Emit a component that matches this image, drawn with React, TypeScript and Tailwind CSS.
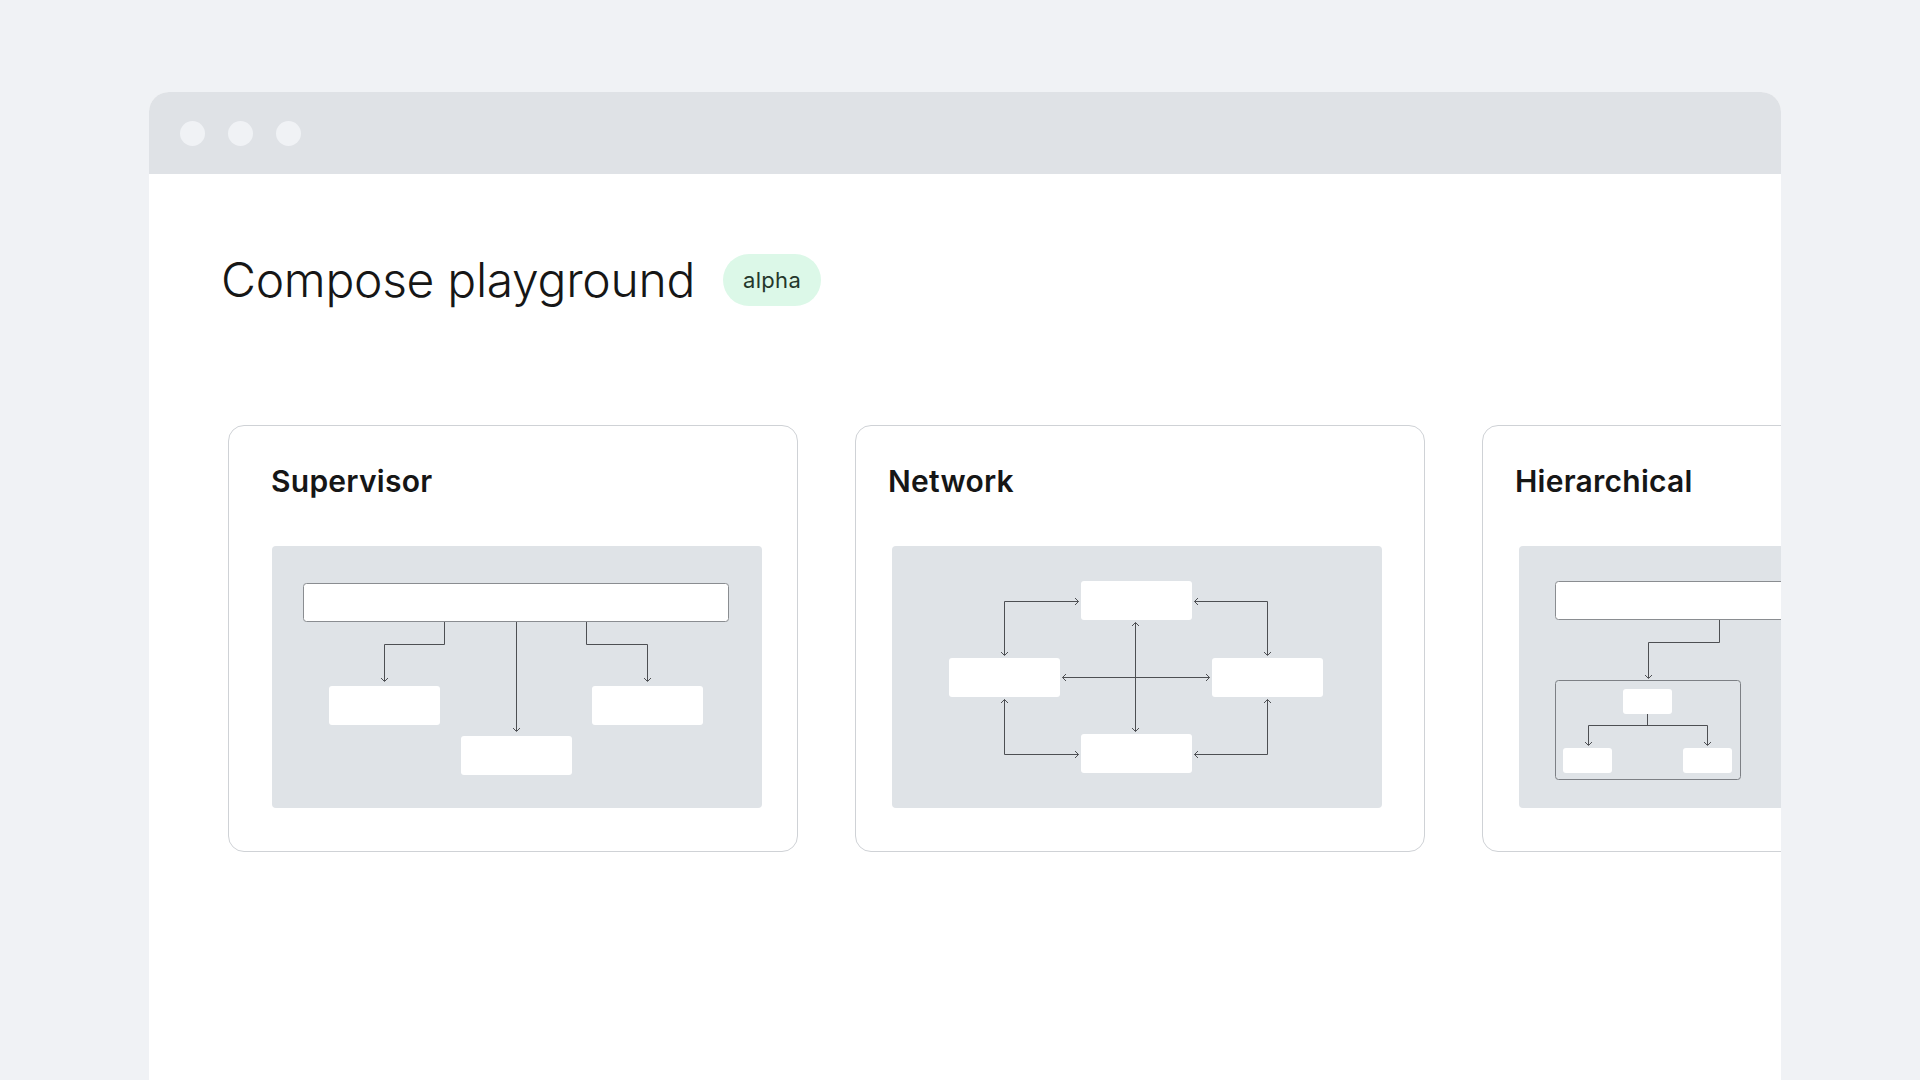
import React from 'react';

type Dir = 'up' | 'down' | 'left' | 'right';

const LINE = '#4d4f53';

// small open chevron at the tip of a connector
function Tip({ x, y, dir }: { x: number; y: number; dir: Dir }) {
  const s = 3.5;
  const d =
    dir === 'down'
      ? `M${x - s} ${y - s} L${x} ${y} L${x + s} ${y - s}`
      : dir === 'up'
        ? `M${x - s} ${y + s} L${x} ${y} L${x + s} ${y + s}`
        : dir === 'right'
          ? `M${x - s} ${y - s} L${x} ${y} L${x - s} ${y + s}`
          : `M${x + s} ${y - s} L${x} ${y} L${x + s} ${y + s}`;
  return <path d={d} fill="none" stroke={LINE} strokeWidth="1" />;
}

function Box({ x, y, w, h }: { x: number; y: number; w: number; h: number }) {
  return <rect x={x} y={y} width={w} height={h} rx="3" fill="#ffffff" />;
}

function SupervisorDiagram() {
  return (
    <svg width="490" height="262" viewBox="0 0 490 262" className="block">
      <rect x="31.5" y="37.5" width="425" height="38" rx="3" fill="#ffffff" stroke="#8a8d91" strokeWidth="1" />
      <Box x={57} y={140} w={111} h={39} />
      <Box x={189} y={190} w={111} h={39} />
      <Box x={320} y={140} w={111} h={39} />
      <path d="M172.5 76 V98.5 H112.5 V135" fill="none" stroke={LINE} strokeWidth="1" />
      <Tip x={112.5} y={135.5} dir="down" />
      <path d="M244.5 76 V185" fill="none" stroke={LINE} strokeWidth="1" />
      <Tip x={244.5} y={185.5} dir="down" />
      <path d="M314.5 76 V98.5 H375.5 V135" fill="none" stroke={LINE} strokeWidth="1" />
      <Tip x={375.5} y={135.5} dir="down" />
    </svg>
  );
}

function NetworkDiagram() {
  return (
    <svg width="490" height="262" viewBox="0 0 490 262" className="block">
      <Box x={189} y={35} w={111} h={39} />
      <Box x={57} y={112} w={111} h={39} />
      <Box x={320} y={112} w={111} h={39} />
      <Box x={189} y={188} w={111} h={39} />
      {/* top corners */}
      <path d="M186.5 55.5 H112.5 V109" fill="none" stroke={LINE} strokeWidth="1" />
      <Tip x={186.5} y={55.5} dir="right" />
      <Tip x={112.5} y={109.5} dir="down" />
      <path d="M302.5 55.5 H375.5 V109" fill="none" stroke={LINE} strokeWidth="1" />
      <Tip x={302.5} y={55.5} dir="left" />
      <Tip x={375.5} y={109.5} dir="down" />
      {/* cross */}
      <path d="M243.5 76.5 V185.5" fill="none" stroke={LINE} strokeWidth="1" />
      <Tip x={243.5} y={76.5} dir="up" />
      <Tip x={243.5} y={185.5} dir="down" />
      <path d="M170.5 131.5 H317.5" fill="none" stroke={LINE} strokeWidth="1" />
      <Tip x={170.5} y={131.5} dir="left" />
      <Tip x={317.5} y={131.5} dir="right" />
      {/* bottom corners */}
      <path d="M112.5 153.5 V208.5 H186.5" fill="none" stroke={LINE} strokeWidth="1" />
      <Tip x={112.5} y={153.5} dir="up" />
      <Tip x={186.5} y={208.5} dir="right" />
      <path d="M375.5 153.5 V208.5 H302.5" fill="none" stroke={LINE} strokeWidth="1" />
      <Tip x={375.5} y={153.5} dir="up" />
      <Tip x={302.5} y={208.5} dir="left" />
    </svg>
  );
}

function HierarchicalDiagram() {
  return (
    <svg width="490" height="262" viewBox="0 0 490 262" className="block">
      <rect x="36.5" y="35.5" width="425" height="38" rx="3" fill="#ffffff" stroke="#8a8d91" strokeWidth="1" />
      <path d="M200.5 74 V96.5 H129.5 V132" fill="none" stroke={LINE} strokeWidth="1" />
      <Tip x={129.5} y={132.5} dir="down" />
      <rect x="36.5" y="134.5" width="185" height="99" rx="3" fill="none" stroke="#7d8085" strokeWidth="1" />
      <Box x={104} y={143} w={49} h={25} />
      <Box x={44} y={202} w={49} h={25} />
      <Box x={164} y={202} w={49} h={25} />
      <path d="M128.5 168 V179.5 M69.5 199 V179.5 H188.5 V199" fill="none" stroke={LINE} strokeWidth="1" />
      <Tip x={69.5} y={199.5} dir="down" />
      <Tip x={188.5} y={199.5} dir="down" />
    </svg>
  );
}

interface CardProps {
  title: string;
  inset: string;
  titleShift: string;
  children: React.ReactNode;
}

function PatternCard({ title, inset, titleShift, children }: CardProps) {
  return (
    <div className={`shrink-0 w-[570px] h-[427px] rounded-[16px] border border-[#cfd2d6] bg-white pt-[37px] ${inset}`}>
      <h2 className={`text-[30px] leading-[36px] font-semibold text-[#161616] tracking-[0.25px] ${titleShift}`}>
        {title}
      </h2>
      <div className="mt-[47px] w-[490px] h-[262px] rounded-[4px] bg-[#dfe3e7] overflow-hidden">
        {children}
      </div>
    </div>
  );
}

export default function App() {
  return (
    <div className="min-h-screen h-[1080px] overflow-hidden bg-[#f0f2f5] pt-[92px] pl-[149px] font-['Inter','Liberation_Sans',sans-serif]">
      <div className="w-[1632px] h-[988px] rounded-t-[20px] bg-white overflow-hidden">
        {/* window chrome */}
        <div className="h-[82px] bg-[#dfe2e6] flex items-center gap-[23px] pl-[31px]">
          <span className="w-[25px] h-[25px] rounded-full bg-[#f0f2f5]" />
          <span className="w-[25px] h-[25px] rounded-full bg-[#f0f2f5]" />
          <span className="w-[25px] h-[25px] rounded-full bg-[#f0f2f5]" />
        </div>

        <div className="mt-[80px] pl-[72px] flex items-center gap-[28px] h-[52px]">
          <h1 className="text-[48px] leading-[48px] font-light text-[#161616] tracking-[-0.3px]">
            Compose playground
          </h1>
          <span className="h-[52px] px-[20px] rounded-full bg-[#dcf8e8] text-[#24372b] text-[22px] flex items-center tracking-[0.3px]">
            alpha
          </span>
        </div>

        <div className="mt-[119px] pl-[79px] flex gap-[57px]">
          <PatternCard title="Supervisor" inset="pl-[43px]" titleShift="-ml-[1px]">
            <SupervisorDiagram />
          </PatternCard>
          <PatternCard title="Network" inset="pl-[36px]" titleShift="-ml-[4px]">
            <NetworkDiagram />
          </PatternCard>
          <PatternCard title="Hierarchical" inset="pl-[36px]" titleShift="-ml-[4px]">
            <HierarchicalDiagram />
          </PatternCard>
        </div>
      </div>
    </div>
  );
}
